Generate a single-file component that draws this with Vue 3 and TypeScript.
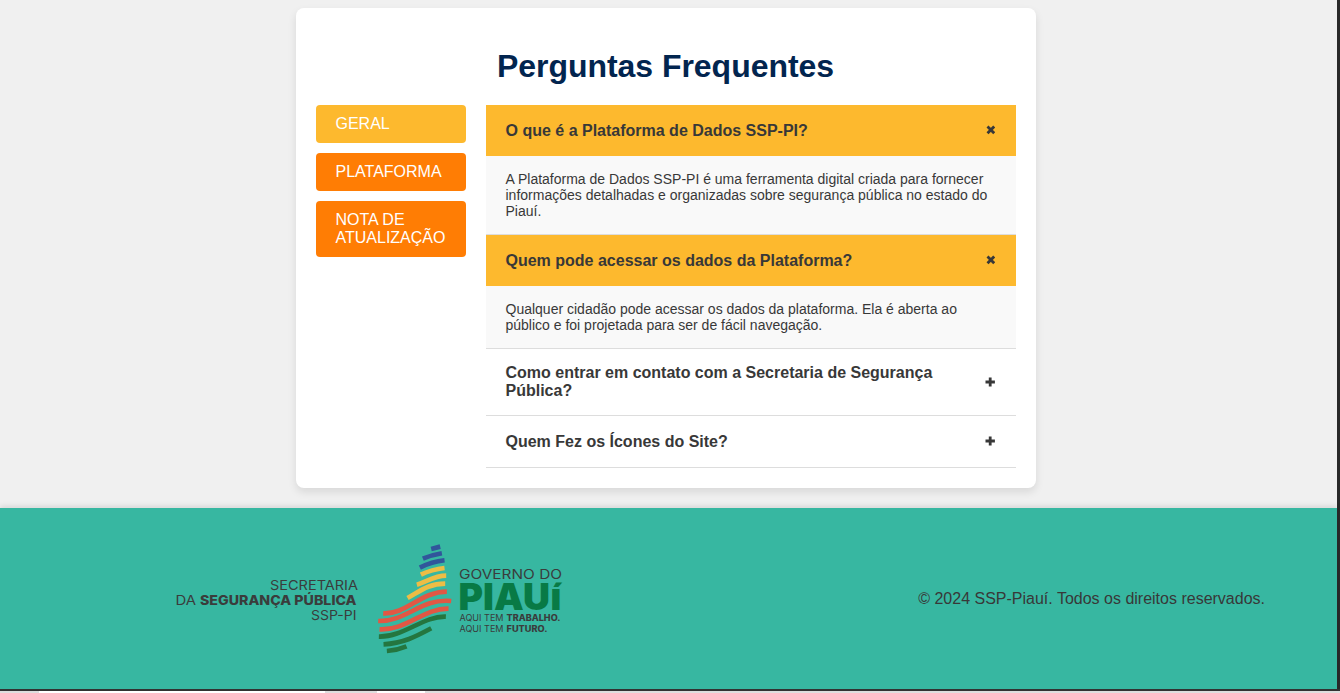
<script setup lang="ts">
import { ref } from 'vue'

interface Faq {
  question: string
  answer: string
  open: boolean
}

const tabs = ['GERAL', 'PLATAFORMA', 'NOTA DE ATUALIZAÇÃO']
const activeTab = ref(0)

const faqs = ref<Faq[]>([
  {
    question: 'O que é a Plataforma de Dados SSP-PI?',
    answer:
      'A Plataforma de Dados SSP-PI é uma ferramenta digital criada para fornecer informações detalhadas e organizadas sobre segurança pública no estado do Piauí.',
    open: true,
  },
  {
    question: 'Quem pode acessar os dados da Plataforma?',
    answer:
      'Qualquer cidadão pode acessar os dados da plataforma. Ela é aberta ao público e foi projetada para ser de fácil navegação.',
    open: true,
  },
  { question: 'Como entrar em contato com a Secretaria de Segurança Pública?', answer: '', open: false },
  { question: 'Quem Fez os Ícones do Site?', answer: '', open: false },
])

const stripes = [
  { color: '#31569b', d: 'M183 41L210 34' },
  { color: '#31569b', d: 'M158 70Q185 59 215 54' },
  { color: '#31569b', d: 'M149 97Q185 79 223 75' },
  { color: '#edbd45', d: 'M152 118Q185 102 223 98' },
  { color: '#edbd45', d: 'M140 148C172 139 190 121 228 121' },
  { color: '#edbd45', d: 'M112 188C150 167 175 145 225 145' },
  { color: '#e25744', d: 'M39 234C110 238 150 169 230 169' },
  { color: '#e25744', d: 'M24 257C110 260 150 188 243 197' },
  { color: '#e25744', d: 'M28 282C110 286 160 218 235 220' },
  { color: '#24763f', d: 'M26 304C100 306 160 241 227 244' },
  { color: '#24763f', d: 'M40 327C100 324 140 302 183 279' },
  { color: '#24763f', d: 'M50 347Q80 345 109 333' },
]
</script>

<template>
  <div class="screen">
    <div class="page">
      <main class="card">
        <h1>Perguntas Frequentes</h1>
        <div class="columns">
          <nav class="tabs">
            <button
              v-for="(tab, i) in tabs"
              :key="tab"
              :class="['tab', { active: i === activeTab }]"
              @click="activeTab = i"
            >
              {{ tab }}
            </button>
          </nav>
          <section class="faqs">
            <article v-for="faq in faqs" :key="faq.question" class="faq">
              <div :class="['question', { open: faq.open }]" @click="faq.open = !faq.open">
                <span>{{ faq.question }}</span>
                <svg class="toggle" width="10" height="10" viewBox="0 0 10 10">
                  <path v-if="faq.open" d="M2.5 1.5L9.2 8.2M9.2 1.5L2.5 8.2" />
                  <path v-else d="M0.5 5H9.9M5.2 0.5V9.5" />
                </svg>
              </div>
              <p v-if="faq.open" class="answer">{{ faq.answer }}</p>
            </article>
          </section>
        </div>
      </main>

      <footer class="footer">
        <svg class="logo" width="400" height="125" viewBox="0 0 400 125">
          <g class="dark" font-size="13.4">
            <text x="100" y="55.4" textLength="88" lengthAdjust="spacingAndGlyphs">SECRETARIA</text>
            <text x="5.5" y="70" textLength="20.5" lengthAdjust="spacingAndGlyphs">DA</text>
            <text x="30" y="70" textLength="156.5" lengthAdjust="spacingAndGlyphs" class="heavy">SEGURANÇA PÚBLICA</text>
            <text x="141" y="84.8" textLength="45.5" lengthAdjust="spacingAndGlyphs">SSP-PI</text>
          </g>
          <g transform="translate(200.2 0.3) scale(0.33333)" fill="none" stroke-width="14">
            <path v-for="s in stripes" :key="s.d" :d="s.d" :stroke="s.color" />
          </g>
          <text x="289" y="43.8" font-size="12.8" textLength="103" lengthAdjust="spacingAndGlyphs" class="dark">GOVERNO DO</text>
          <g class="green">
            <text x="288.5" y="74.8" font-size="36.5" textLength="91.5" lengthAdjust="spacingAndGlyphs">PIAU</text>
            <text x="380.6" y="74.8" font-size="28" textLength="10.8" lengthAdjust="spacingAndGlyphs">Í</text>
          </g>
          <g class="dark" font-size="8.4">
            <text x="289.5" y="86" textLength="44" lengthAdjust="spacingAndGlyphs">AQUI TEM</text>
            <text x="336.5" y="86" textLength="54" lengthAdjust="spacingAndGlyphs" class="heavy">TRABALHO.</text>
            <text x="289.5" y="96.5" textLength="44" lengthAdjust="spacingAndGlyphs">AQUI TEM</text>
            <text x="336.5" y="96.5" textLength="41" lengthAdjust="spacingAndGlyphs" class="heavy">FUTURO.</text>
          </g>
        </svg>
        <p class="copyright">© 2024 SSP-Piauí. Todos os direitos reservados.</p>
      </footer>
    </div>
    <div class="edge"><i></i><i></i></div>
  </div>
</template>

<style>
body {
  overflow: hidden;
}
</style>

<style scoped>
.screen {
  width: 1340px;
  height: 693px;
  background: #292929;
  font-family: 'Liberation Sans', Arial, sans-serif;
  color: #383838;
}
.page {
  display: flex;
  flex-direction: column;
  box-sizing: border-box;
  width: 1337px;
  height: 689px;
  padding-top: 8px;
  background: #f0f0f0;
}
.card {
  box-sizing: border-box;
  width: 740px;
  height: 480px;
  margin-left: 296px;
  padding: 20px;
  background: #fff;
  border-radius: 8px;
  box-shadow: 0 4px 8px rgba(0, 0, 0, 0.1);
}
h1 {
  margin: 19px 0 20px;
  padding-right: 1px;
  font-size: 32px;
  line-height: 38px;
  letter-spacing: -0.04px;
  text-align: center;
  color: #02254f;
}
.columns {
  display: flex;
  gap: 20px;
}
.tabs {
  display: flex;
  flex-direction: column;
  align-items: stretch;
  gap: 10px;
  width: 150px;
}
.tab {
  padding: 10px 19.5px;
  border: 0;
  border-radius: 4px;
  background: #ff7d04;
  color: #fff;
  font: 16px/18px 'Liberation Sans', Arial, sans-serif;
  text-align: left;
}
.tab.active {
  background: #fdb92e;
}
.faqs {
  width: 530px;
}
.faq {
  border-bottom: 1px solid #ddd;
}
.question {
  display: flex;
  align-items: center;
  justify-content: space-between;
  box-sizing: border-box;
  min-height: 51px;
  padding: 15px 20px 15px 19.5px;
  font-size: 16px;
  line-height: 18px;
  font-weight: bold;
}
.question span {
  max-width: 450px;
}
.question.open {
  background: #fdb92e;
}
.toggle {
  flex: none;
  margin: 0 1px 1px 0;
  fill: none;
  stroke: #383838;
  stroke-width: 2.8;
}
.answer {
  margin: 0;
  padding: 15px 20px 15px 19.5px;
  background: #f9f9f9;
  font-size: 14px;
  line-height: 16px;
}
.footer {
  display: flex;
  align-items: center;
  justify-content: space-between;
  box-sizing: border-box;
  height: 181px;
  margin-top: 20px;
  padding: 0 72px 0 170px;
  background: #37b7a1;
  box-shadow: 0 -2px 5px rgba(0, 0, 0, 0.1);
}
.logo {
  margin-bottom: 2px;
  font-family: Inter, 'Open Sans', sans-serif;
}
.dark {
  fill: #3a3c3c;
}
.heavy {
  font-weight: 800;
}
.green {
  fill: #087a45;
  font-weight: 900;
}
.copyright {
  margin: 0;
  font-size: 16px;
  line-height: 18px;
}
.edge {
  display: flex;
  gap: 52px;
  height: 2px;
  margin-top: 2px;
  padding-left: 39px;
  background: #dedede;
  box-shadow: 0 -2px #333;
}
.edge i {
  width: 286px;
  background: #fff;
}
.edge i:last-child {
  width: 48px;
}
</style>
